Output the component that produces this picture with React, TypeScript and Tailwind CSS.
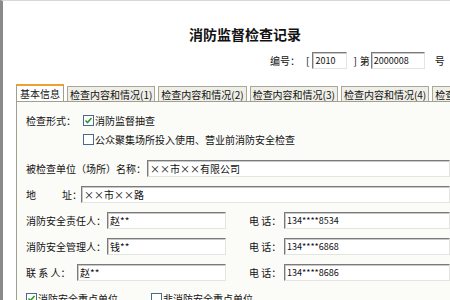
import React from 'react';

const font = { fontFamily: '"Noto Sans CJK SC", "Noto Sans", sans-serif' };

// sunken XP-style text box
const Box = ({ value, className = '', small = false }: { value: string; className?: string; small?: boolean }) => (
  <div
    className={`h-[17px] shrink-0 bg-white border border-t-[#7a7a7a] border-l-[#7a7a7a] border-b-[#e4e4e0] border-r-[#e4e4e0] shadow-[inset_1px_1px_0_#c8c8c8] flex items-center pl-[2px] overflow-hidden whitespace-nowrap ${small ? 'text-[9px]' : 'text-[10px]'} ${className}`}
  >
    {value}
  </div>
);

const Check = ({ checked, label }: { checked: boolean; label: string }) => (
  <div className="flex items-center gap-[1px] whitespace-nowrap shrink-0">
    <span className="w-[11px] h-[11px] shrink-0 border border-[#4a6a8a] bg-white flex items-center justify-center">
      {checked && (
        <svg width="9" height="9" viewBox="0 0 9 9">
          <path d="M1.5 4.5 L3.5 6.5 L7.5 2" stroke="#2a9a2a" strokeWidth="1.6" fill="none" />
        </svg>
      )}
    </span>
    <span>{label}</span>
  </div>
);

const Label = ({ children, className = '' }: { children: React.ReactNode; className?: string }) => (
  <span className={`shrink-0 whitespace-nowrap ${className}`}>{children}</span>
);

const tabs = ['检查内容和情况(1)', '检查内容和情况(2)', '检查内容和情况(3)', '检查内容和情况(4)', '检查内容和情况(5)'];

export default function App() {
  return (
    <div
      className="w-[450px] h-[300px] overflow-hidden bg-white border-l-[3px] border-l-[#8a8a8a] border-t border-t-[#d8d8d8] text-[#111]"
      style={font}
    >
      <div className="pt-[23px] pl-[186px] text-[14px] leading-[20px] font-bold whitespace-nowrap">消防监督检查记录</div>

      <div className="mt-[8px] flex items-center pl-[267px] text-[10px] h-[17px] whitespace-nowrap">
        <Label>编号：</Label>
        <Label className="ml-[6px]">[</Label>
        <Box value="2010" className="w-[35px] ml-[3px]" small />
        <Label className="ml-[6px]">]</Label>
        <Label className="ml-[3px]">第</Label>
        <Box value="2000008" className="w-[54px] ml-[1px]" small />
        <Label className="ml-[10px]">号</Label>
      </div>

      <div className="mt-[15px] ml-[13px] flex items-end gap-[3px] text-[10px] leading-[13px] whitespace-nowrap">
        <div className="shrink-0 px-[3px] pt-[1px] pb-[1px] bg-white border border-[#a0a090] border-b-0 border-t-[2px] border-t-[#f0a030]">基本信息</div>
        {tabs.map((t) => (
          <div key={t} className="shrink-0 px-[2px] pt-[1px] bg-[#efefe8] border border-[#a8a898] border-b-0">
            {t}
          </div>
        ))}
      </div>

      <div className="ml-[13px] border-l border-t border-[#a0a090] bg-[#fbfbf8] h-[200px] pl-[9px] pt-[12px] text-[10px] leading-[13px]">
        <div className="flex items-start">
          <Label className="w-[57px]">检查形式：</Label>
          <div className="flex flex-col gap-[6px]">
            <Check checked label="消防监督抽查" />
            <Check checked={false} label="公众聚集场所投入使用、营业前消防安全检查" />
          </div>
        </div>

        <div className="mt-[14px] flex items-center">
          <Label className="w-[121px]">被检查单位（场所）名称：</Label>
          <Box value="××市××有限公司" className="flex-1" />
        </div>

        <div className="mt-[9px] flex items-center">
          <Label className="w-[55px]">地<span className="ml-[26px]">址：</span></Label>
          <Box value="××市××路" className="flex-1" />
        </div>

        <div className="mt-[9px] flex items-center">
          <Label className="w-[81px]">消防安全责任人：</Label>
          <Box value="赵**" className="w-[119px]" />
          <Label className="ml-[23px] w-[35px]">电 话：</Label>
          <Box value="134****8534" className="flex-1" small />
        </div>

        <div className="mt-[9px] flex items-center">
          <Label className="w-[81px]">消防安全管理人：</Label>
          <Box value="钱**" className="w-[119px]" />
          <Label className="ml-[23px] w-[35px]">电 话：</Label>
          <Box value="134****6868" className="flex-1" small />
        </div>

        <div className="mt-[9px] flex items-center">
          <Label className="w-[51px]">联 系 人：</Label>
          <Box value="赵**" className="w-[149px]" />
          <Label className="ml-[23px] w-[35px]">电 话：</Label>
          <Box value="134****8686" className="flex-1" small />
        </div>

        <div className="mt-[11px] flex items-center gap-[33px]">
          <Check checked label="消防安全重点单位" />
          <Check checked={false} label="非消防安全重点单位" />
        </div>
      </div>
    </div>
  );
}
